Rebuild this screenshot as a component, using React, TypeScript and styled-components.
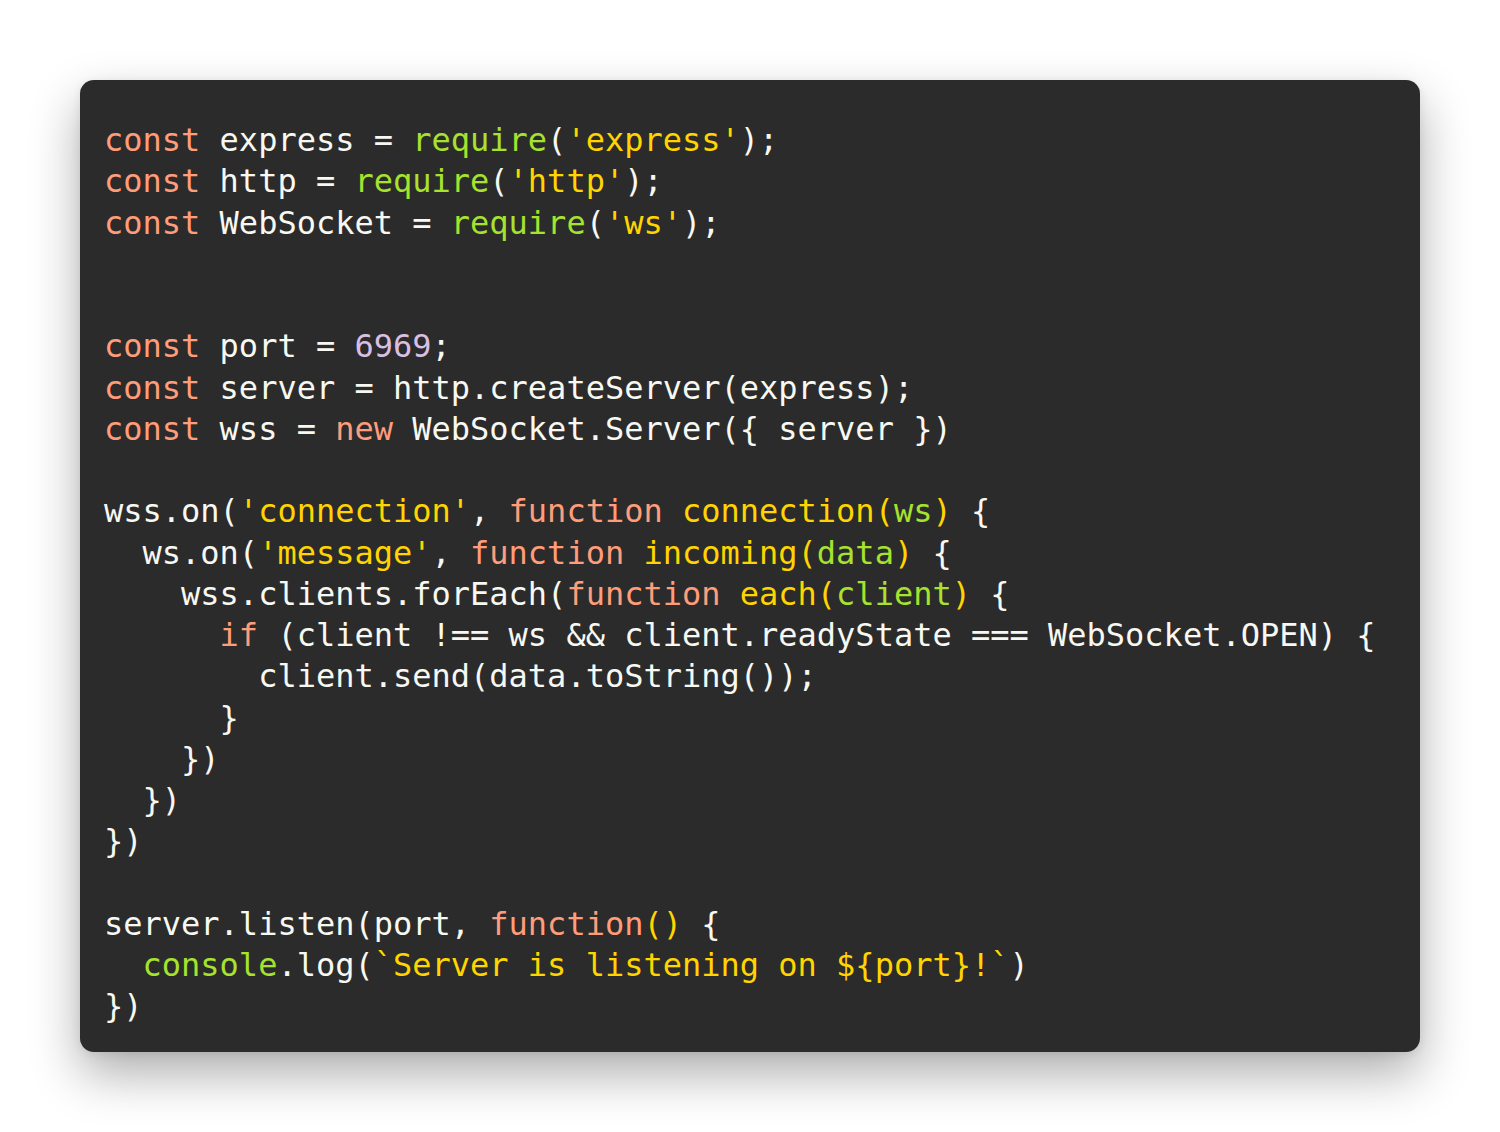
import React from 'react';
import styled, { createGlobalStyle } from 'styled-components';

type Kind = 'plain' | 'keyword' | 'builtin' | 'string' | 'number' | 'fn' | 'param';

type Token = [Kind, string];

const k = (text: string): Token => ['keyword', text];
const p = (text: string): Token => ['plain', text];
const b = (text: string): Token => ['builtin', text];
const s = (text: string): Token => ['string', text];
const n = (text: string): Token => ['number', text];
const f = (text: string): Token => ['fn', text];
const a = (text: string): Token => ['param', text];

const lines: Token[][] = [
  [k('const'), p(' express = '), b('require'), p('('), s("'express'"), p(');')],
  [k('const'), p(' http = '), b('require'), p('('), s("'http'"), p(');')],
  [k('const'), p(' WebSocket = '), b('require'), p('('), s("'ws'"), p(');')],
  [],
  [],
  [k('const'), p(' port = '), n('6969'), p(';')],
  [k('const'), p(' server = http.createServer(express);')],
  [k('const'), p(' wss = '), k('new'), p(' WebSocket.Server({ server })')],
  [],
  [p('wss.on('), s("'connection'"), p(', '), k('function'), p(' '), f('connection('), a('ws'), f(')'), p(' {')],
  [p('  ws.on('), s("'message'"), p(', '), k('function'), p(' '), f('incoming('), a('data'), f(')'), p(' {')],
  [p('    wss.clients.forEach('), k('function'), p(' '), f('each('), a('client'), f(')'), p(' {')],
  [p('      '), k('if'), p(' (client !== ws && client.readyState === WebSocket.OPEN) {')],
  [p('        client.send(data.toString());')],
  [p('      }')],
  [p('    })')],
  [p('  })')],
  [p('})')],
  [],
  [p('server.listen(port, '), k('function'), f('()'), p(' {')],
  [p('  '), b('console'), p('.log('), s('`Server is listening on ${port}!`'), p(')')],
  [p('})')],
];

const colors: Record<Kind, string> = {
  plain: '#f8f8f2',
  keyword: '#ff9d7a',
  builtin: '#a6e22e',
  string: '#ffd400',
  number: '#d9bfe2',
  fn: '#ffd400',
  param: '#a6e22e',
};

const GlobalStyle = createGlobalStyle`
  html, body {
    margin: 0;
    padding: 0;
    background: #ffffff;
  }
`;

const Page = styled.div`
  padding: 80px;
  width: 1340px;
`;

const CodeCard = styled.pre`
  margin: 0;
  box-sizing: border-box;
  width: 1340px;
  padding: 40px 24px 24px 24px;
  background: #2b2b2b;
  border-radius: 14px;
  box-shadow: 0 22px 50px rgba(0, 0, 0, 0.32), 0 2px 10px rgba(0, 0, 0, 0.08);
  font-family: 'DejaVu Sans Mono', 'Liberation Mono', monospace;
  font-size: 32px;
  line-height: 41.25px;
  color: #f8f8f2;
  white-space: pre;
`;

const Line = styled.div`
  height: 41.25px;
`;

const Tok = styled.span<{ $kind: Kind }>`
  color: ${({ $kind }) => colors[$kind]};
`;

const App = () => {
  return (
    <>
      <GlobalStyle />
      <Page>
        <CodeCard>
          {lines.map((line, i) => (
            <Line key={i}>
              {line.map(([kind, text], j) => (
                <Tok key={j} $kind={kind}>
                  {text}
                </Tok>
              ))}
            </Line>
          ))}
        </CodeCard>
      </Page>
    </>
  );
};

export default App;
